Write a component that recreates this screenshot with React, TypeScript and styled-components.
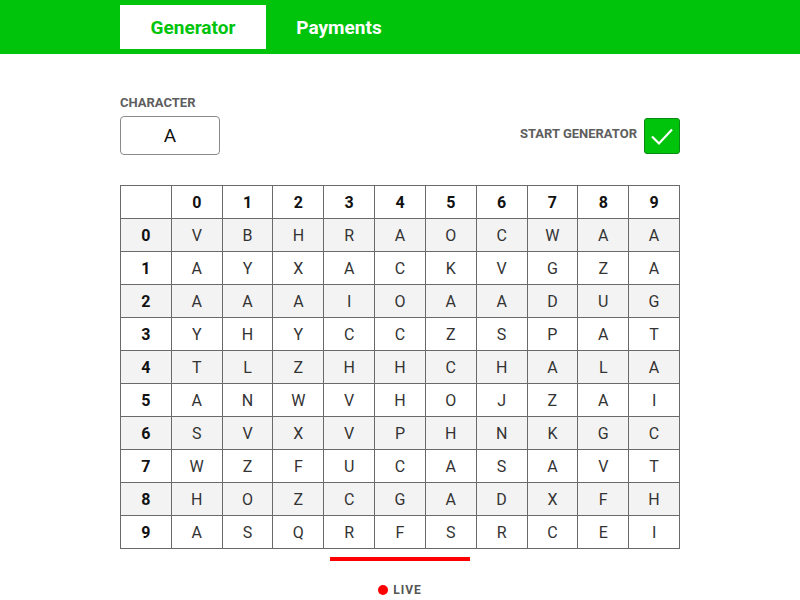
import React from "react";
import styled, { createGlobalStyle } from "styled-components";

const GlobalStyle = createGlobalStyle`
  html, body { margin: 0; padding: 0; background: #ffffff; }
  body { font-family: Roboto, "Liberation Sans", Arial, sans-serif; }
`;

const Header = styled.header`
  height: 54px;
  background: #00c40c;
  box-sizing: border-box;
  padding-top: 5px;
`;

const Nav = styled.nav`
  width: 560px;
  margin: 0 auto;
  display: flex;
`;

const Tab = styled.div<{ $active?: boolean }>`
  width: 146px;
  height: 44px;
  display: flex;
  align-items: center;
  justify-content: center;
  font-size: 19px;
  font-weight: 700;
  background: ${(p) => (p.$active ? "#ffffff" : "transparent")};
  color: ${(p) => (p.$active ? "#00c40c" : "#ffffff")};
`;

const Main = styled.main`
  width: 560px;
  margin: 0 auto;
  display: flex;
  flex-direction: column;
`;

const Controls = styled.div`
  display: flex;
  justify-content: space-between;
  align-items: flex-end;
  margin-top: 41px;
`;

const Field = styled.div`
  display: flex;
  flex-direction: column;
`;

const Label = styled.span<{ $lift?: number }>`
  font-size: 13px;
  font-weight: 700;
  color: #5e5e5e;
  line-height: 15px;
  padding-bottom: ${(p) => p.$lift ?? 0}px;
`;

const CharBox = styled.div`
  margin-top: 6px;
  width: 100px;
  height: 39px;
  box-sizing: border-box;
  border: 1px solid #8a8a8a;
  border-radius: 4px;
  display: flex;
  align-items: center;
  justify-content: center;
  font-size: 19px;
  color: #111;
`;

const StartRow = styled.div`
  display: flex;
  align-items: center;
  gap: 7px;
  margin-bottom: 1px;
`;

const Check = styled.div`
  width: 36px;
  height: 36px;
  box-sizing: border-box;
  background: #00c40c;
  border: 1px solid #0a8a12;
  border-radius: 3px;
  display: flex;
  align-items: center;
  justify-content: center;
`;

const Grid = styled.table`
  margin-top: 30px;
  width: 560px;
  border-collapse: collapse;
  table-layout: fixed;
`;

const Row = styled.tr<{ $shade?: boolean }>`
  height: 33px;
  background: ${(p) => (p.$shade ? "#f3f3f3" : "#ffffff")};
`;

const Cell = styled.td<{ $bold?: boolean }>`
  border: 1px solid #6a6a6a;
  padding: 0;
  text-align: center;
  font-size: 16px;
  font-weight: ${(p) => (p.$bold ? 700 : 400)};
  color: ${(p) => (p.$bold ? "#111" : "#333")};
`;

const RedBar = styled.div`
  align-self: center;
  width: 140px;
  height: 4px;
  background: #ff0000;
  margin-top: 8px;
`;

const Live = styled.div`
  align-self: center;
  display: flex;
  align-items: center;
  gap: 5px;
  margin-top: 22px;
  font-size: 12px;
  font-weight: 700;
  letter-spacing: 1px;
  color: #555;
`;

const Dot = styled.span`
  width: 10px;
  height: 10px;
  border-radius: 50%;
  background: #ff0000;
`;

const data = [
  "VBHRAOCWAA",
  "AYXACKVGZA",
  "AAAIOAADUG",
  "YHYCCZSPAT",
  "TLZHHCHALA",
  "ANWVHOJZAI",
  "SVXVPHNKGC",
  "WZFUCASAVT",
  "HOZCGADXFH",
  "ASQRFSRCEI",
];

export default function App() {
  const cols = Array.from({ length: 10 }, (_, i) => i);
  return (
    <>
      <GlobalStyle />
      <Header>
        <Nav>
          <Tab $active>Generator</Tab>
          <Tab>Payments</Tab>
        </Nav>
      </Header>
      <Main>
        <Controls>
          <Field>
            <Label>CHARACTER</Label>
            <CharBox>A</CharBox>
          </Field>
          <StartRow>
            <Label $lift={5}>START GENERATOR</Label>
            <Check>
              <svg width="26" height="26" viewBox="0 0 26 26">
                <path d="M3 13.5 L10 20.5 L23 6.5" fill="none" stroke="#fff" strokeWidth="2.2" />
              </svg>
            </Check>
          </StartRow>
        </Controls>
        <Grid>
          <tbody>
            <Row>
              <Cell $bold />
              {cols.map((c) => (
                <Cell key={c} $bold>{c}</Cell>
              ))}
            </Row>
            {data.map((line, r) => (
              <Row key={r} $shade={r % 2 === 0}>
                <Cell $bold>{r}</Cell>
                {line.split("").map((ch, c) => (
                  <Cell key={c}>{ch}</Cell>
                ))}
              </Row>
            ))}
          </tbody>
        </Grid>
        <RedBar />
        <Live>
          <Dot />
          LIVE
        </Live>
      </Main>
    </>
  );
}
